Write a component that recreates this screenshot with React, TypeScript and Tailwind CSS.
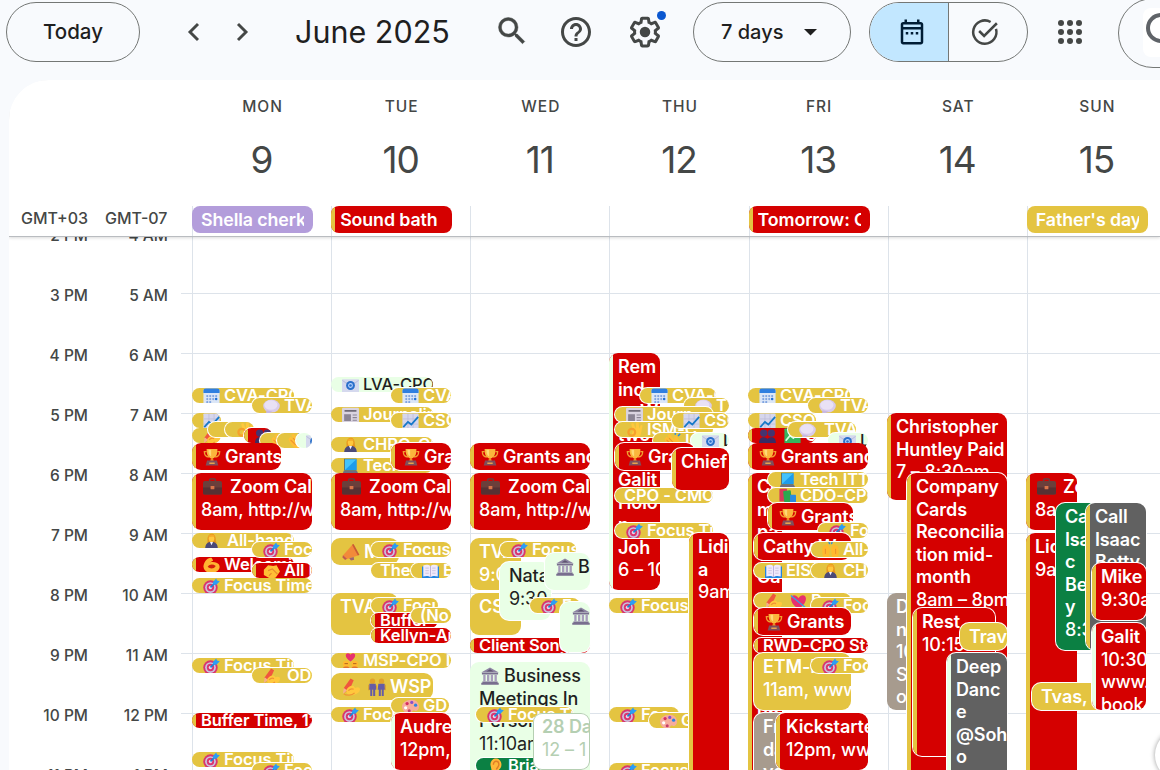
import React from "react";

type Tone = "y" | "r" | "g" | "G" | "s" | "d" | "w" | "p";
type Ev = {
  x: number; // left edge, window pixels
  y: number; // top edge, window pixels
  w: number;
  h: number;
  c: Tone;
  bar?: "y" | "g";
  o?: boolean; // outlined because it overlaps another event
  i?: string[]; // leading icons
  t?: string[]; // text lines
  n?: number; // index of the first line set in regular weight
  p?: number; // left padding
  g?: number; // gap between icon and title
};

const GRID_TOP = 237;
const COL = 139.15;
const FIRST = 192;

const tones: Record<Tone, string> = {
  y: "bg-[#e4c441] text-white",
  r: "bg-[#d50000] text-white",
  g: "bg-[#e9ffe6] text-[#1f1f1f]",
  G: "bg-[#0b8043] text-white",
  s: "bg-[#a79b8e] text-white",
  d: "bg-[#616161] text-white",
  w: "bg-white text-[#b5cfb2]",
  p: "bg-[#b39ddb] text-white",
};

function Glyph({ name }: { name: string }) {
  const art: Record<string, React.ReactNode> = {
    target: (
      <>
        <circle cx="8.8" cy="11.200" r="8.500" fill="#d9366f" />
        <circle cx="8.8" cy="11.200" r="6.300" fill="#c9c3e0" />
        <circle cx="8.8" cy="11.200" r="4.300" fill="#d9366f" />
        <circle cx="8.8" cy="11.200" r="2" fill="#e9d9ee" />
        <path d="M8.8 11 16 4" stroke="#1583d8" strokeWidth="2" />
        <path d="M11.500 5 15.500.5l1 2.500 3.300.8-4 4.200-3.800-.3z" fill="#2a9df4" />
      </>
    ),
    trophy: (
      <>
        <path d="M4 4H1.500c0 4 1.500 6 5 6M16 4h2.500c0 4-1.500 6-5 6" stroke="#f0a030" strokeWidth="1.500" fill="none" />
        <path d="M4 1h12c0 6.500-1.500 10-6 10.500C5.500 11 4 7.500 4 1z" fill="#fbb53c" />
        <path d="M6 2h3v7.500C7 8.500 6 6 6 2z" fill="#ffd976" />
        <path d="M9 11h2l1 4H8z" fill="#f08c24" />
        <path d="M4.500 14h11L17 19.500H3z" fill="#7d4f5c" />
        <path d="M7 16h6v1.800H7z" fill="#e9a14c" />
      </>
    ),
    case: (
      <>
        <path d="M7 5V3.200C7 2.500 7.500 2 8.200 2h3.600c.7 0 1.200.5 1.200 1.200V5" stroke="#5c4545" strokeWidth="1.500" fill="none" />
        <rect x="0" y="4.200" width="20" height="14.300" rx="2" fill="#6b3f3b" />
        <path d="M0 11h20v5.500a2 2 0 0 1-2 2H2a2 2 0 0 1-2-2z" fill="#563133" />
        <rect x="8" y="9.500" width="4" height="3.500" rx=".6" fill="#d9744a" />
      </>
    ),
    cal: (
      <>
        <rect x=".5" y=".5" width="19" height="19.500" rx="2.500" fill="#dbe6f7" />
        <path d="M.5 3A2.500 2.500 0 0 1 3 .5h14A2.500 2.500 0 0 1 19.500 3v3H.5z" fill="#2f7fe0" />
        <g fill="#7ea3e0">
          <circle cx="5" cy="9.500" r="1.300" /><circle cx="8.500" cy="9.500" r="1.300" /><circle cx="12" cy="9.500" r="1.300" /><circle cx="15.500" cy="9.500" r="1.300" />
          <circle cx="5" cy="13" r="1.300" /><circle cx="8.500" cy="13" r="1.300" /><circle cx="12" cy="13" r="1.300" />
          <circle cx="5" cy="16.500" r="1.300" /><circle cx="8.500" cy="16.500" r="1.300" />
        </g>
        <circle cx="15.500" cy="13" r="1.500" fill="#1f6fd6" />
      </>
    ),
    speech: (
      <>
        <ellipse cx="10" cy="9.500" rx="9.800" ry="7.600" fill="#d8cbea" />
        <path d="M4 14.500 3.500 20 11 16z" fill="#c8b8e2" />
        <ellipse cx="9.300" cy="8.300" rx="7.800" ry="5.600" fill="#e9e1f5" />
      </>
    ),
    chart: (
      <>
        <rect x=".5" y=".5" width="19" height="19" rx="1" fill="#d6d6ec" />
        <path d="M7 1v18M13 1v18M1 7h18M1 13h18" stroke="#b9b9d8" strokeWidth=".8" />
        <path d="m1.500 16.500 5.500-6 4 3 8-9" stroke="#1779c9" strokeWidth="2.100" fill="none" />
      </>
    ),
    gchart: (
      <>
        <rect x=".5" y=".5" width="19" height="19" rx="1" fill="#35b55e" />
        <path d="m2 15 5-6 4 3 7-8" stroke="#d7ffe2" strokeWidth="2" fill="none" />
      </>
    ),
    news: (
      <>
        <rect x="0" y="1" width="20" height="18" rx="1.500" fill="#d9d3e0" />
        <path d="M3 4.500h14" stroke="#6f6a78" strokeWidth="2" />
        <rect x="2.500" y="8.500" width="8" height="8" fill="#8a8494" />
        <path d="M12.500 9.500h5M12.500 12.500h5M12.500 15.500h5" stroke="#8a8494" strokeWidth="1.200" />
      </>
    ),
    mail: (
      <>
        <rect x="0" y="2.500" width="20" height="15.500" rx="1" fill="#d5d9ee" />
        <path d="m.5 4 9.500 7 9.500-7" stroke="#b4b9d8" fill="none" />
        <circle cx="10" cy="10" r="5.200" fill="#2a6fca" />
        <circle cx="10" cy="10" r="2.200" fill="none" stroke="#bcd6ff" strokeWidth="1.200" />
      </>
    ),
    laptop: (
      <>
        <path d="M2.500 1h14.500v14h-14.500z" fill="#4a6a7a" />
        <path d="M3.500 1.500h13.500v12.500h-13.500z" fill="#43c3fb" />
        <path d="M3.500 14 17 1.500v12.500z" fill="#1d9cec" />
        <path d="M2 15h15.500l2 4H.5z" fill="#6d6f80" />
      </>
    ),
    person: (
      <>
        <path d="M5.500 10c-2-11 10-13 9.500-1.500l1 3.500H5z" fill="#e8961c" />
        <ellipse cx="10" cy="6.500" rx="3.300" ry="4" fill="#ffc83d" />
        <path d="M6 5c1-4 7-4.500 8-.5-3 0-5 0-8 .5z" fill="#f5ab28" />
        <path d="M2.500 20c0-7 2-9.500 7.500-9.500s7.500 2.500 7.500 9.500z" fill="#4b4a78" />
        <path d="m8.200 10.500 1.800 4 1.800-4z" fill="#f4f4ff" />
      </>
    ),
    mega: (
      <>
        <path d="M1 14 12 1.500l6.500 12L5 18z" fill="#f28a3a" />
        <path d="m12 1.500 6.500 12" stroke="#c95c35" strokeWidth="2" />
        <path d="m1 13.500 4.500 4-2 1.500L.5 16z" fill="#c05a50" />
        <path d="m8 17 2 2.500 3.500-1-.5-3z" fill="#9c6570" />
      </>
    ),
    book: (
      <>
        <path d="M0 4h20v14.500H0z" fill="#2385e0" />
        <path d="M1.500 3C4.500 1.500 8 2 10 3.500c2-1.500 5.500-2 8.500-.5v13c-3-1-6.500-1-8.500.8-2-1.800-5.500-1.800-8.500-.8z" fill="#efe9fb" />
        <path d="M10 3.500v13" stroke="#b4a9d2" />
        <path d="M4 6h4M4 9h4M4 12h4M12 6h4M12 9h4M12 12h4" stroke="#c6bedd" />
      </>
    ),
    books: (
      <>
        <rect x=".5" y="1" width="9" height="15" rx="1" fill="#d83a5a" />
        <rect x="5.500" y="3" width="9" height="15" rx="1" fill="#2aa84f" transform="rotate(-6 10 10)" />
        <rect x="13" y="8" width="7" height="11" rx="1" fill="#2a8be0" />
      </>
    ),
    couple: (
      <>
        <path d="M10 10C3 5.500 3.500.3 7 .3c1.600 0 3 1.700 3 1.700S11.400.3 13 .3C16.500.3 17 5.500 10 10z" fill="#e8316e" />
        <circle cx="5" cy="13" r="4" fill="#ffb92e" /><circle cx="15" cy="13" r="4" fill="#ffb92e" />
        <path d="M.5 20c0-3 2-4 4.500-4s4.500 1 4.500 4zM10.500 20c0-3 2-4 4.500-4s4.500 1 4.500 4z" fill="#e0742f" />
        <path d="M3 12.500h4M13 12.500h4" stroke="#a5541c" />
      </>
    ),
    write: (
      <>
        <path d="M2 11 9.500.5l3.500 2L8 14l-5 2z" fill="#f0563d" />
        <path d="m2 11-1 6.500L6 14z" fill="#f6b08c" />
        <path d="M5 13c2-3 5-5 8-4l1.500 2c3-1.500 5.500-.5 5.500 1.500 0 3-4 6-8 6.500-5 .5-8-2-7-6z" fill="#ffc83d" />
        <path d="M2 17.500c3 2.500 9 2 12-1M7 14c2-2 4-2.500 6-1.500" stroke="#ef9434" strokeWidth="1.400" fill="none" />
      </>
    ),
    men: (
      <>
        <circle cx="5" cy="3.500" r="3" fill="#e2a32b" /><circle cx="15" cy="3.500" r="3" fill="#e2a32b" />
        <path d="M1.500 6.500h7l.8 6.500H8v7H2.500v-7H1zM11.500 6.500h7l.5 6.500h-1.500v7H12v-7h-1.300z" fill="#655ca5" />
        <path d="M5.200 13v7M14.800 13v7" stroke="#e4c441" />
        <path d="M.8 7.500v6M9.500 8v4M19.200 7.500v6" stroke="#d79a35" strokeWidth="1.200" />
      </>
    ),
    people: (
      <>
        <circle cx="5.500" cy="6" r="4.300" fill="#44346f" /><circle cx="14.500" cy="6" r="4.300" fill="#44346f" />
        <path d="M0 19c0-6 2-8 5.500-8 2 0 3.500 1 4.500 2 1-1 2.500-2 4.500-2 3.500 0 5.500 2 5.500 8z" fill="#3a2c63" />
      </>
    ),
    palette: (
      <>
        <path d="M11 2c6 0 9 4 9 8s-3 6-5 5-3 0-3 1.500-1 3-3 2.500C4 18.500 0 14.500 0 10S5 2 11 2z" fill="#f7ac9c" />
        <circle cx="6" cy="6.500" r="1.900" fill="#d62f62" /><circle cx="11.500" cy="5.200" r="1.900" fill="#8b50c8" />
        <circle cx="16" cy="8.500" r="1.900" fill="#2d84df" /><circle cx="4.300" cy="11.500" r="1.900" fill="#fff" />
        <circle cx="8.500" cy="15" r="1.800" fill="#c53b6b" />
      </>
    ),
    bank: (
      <>
        <path d="M10 .5 19.800 6H.2z" fill="#8d83a3" />
        <path d="M1 6.500h18v1.800H1zM1.500 16h17v1.500h-17zM.3 17.500h19.400v2.300H.3z" fill="#786e8e" />
        <path d="M2.500 8.500h2.600V16H2.500zM6.700 8.500h2.600V16H6.700zM10.800 8.500h2.600V16h-2.600zM15 8.500h2.600V16H15z" fill="#a79dbb" />
        <path d="M10 2.500 14 5H6z" fill="#5e556f" />
      </>
    ),
    ear: (
      <>
        <path d="M4 8C4-2 17-2 17 8c0 5-4 5.500-5 9-1 3.500-6 3.500-6 0z" fill="#ffb83a" />
        <path d="M7.500 8c0-5.500 6.500-5.500 6.500 0 0 2-2 3-3 5.500" stroke="#e07e25" strokeWidth="1.600" fill="none" />
      </>
    ),
    ok: (
      <>
        <path d="M8 10 6 2l2.500-.8L11.500 8l.5-7.500h2.800L15.500 8l2-4.500 2 .6L17.500 14c-1 6-9 6.500-11 2z" fill="#ffc83d" />
        <circle cx="6.800" cy="12" r="4" fill="none" stroke="#f5a12c" strokeWidth="2.600" />
      </>
    ),
    clap: (
      <>
        <path d="M.5 7 3 4l5 5-4-6.500 2.500-1.500L12 8V4l2.800-.5L19.500 12c1 5.500-4 8.500-8.500 7C5.500 17.500 2 12 .5 7z" fill="#ffbe35" />
        <path d="m3 8 6 6M6 6l5.500 6" stroke="#ef922f" strokeWidth="1.200" />
        <path d="m13 2 .5-2M16.500 3.500 19 1" stroke="#2a8be0" strokeWidth="1.800" />
      </>
    ),
    hands: (
      <>
        <path d="M2 19C-1 13 .5 6 2 4l2 .5L5 2l2 .5L8 6l1.500 1L8 19zM18 19c3-6 1.500-13 0-15l-2 .5L15 2l-2 .5L12 6l-1.500 1L12 19z" fill="#ffb92e" />
        <path d="M4 8v6M16 8v6" stroke="#e8892c" />
        <path d="M9 2.500 8 0M11 2.500 12 0" stroke="#2a8be0" strokeWidth="1.500" />
      </>
    ),
    muscle: (
      <>
        <path d="M.5 11C1.500 4 6 1 10 1l2 3-4 2.500c3-1 6-.5 8.500.5 4 1.500 4 7 .5 9.500C12 20 1 20 .5 11z" fill="#ffb531" />
        <path d="M5.500 11.500c2-3 6-3.500 9.500-1-2 3.500-6.500 4-9.500 1z" fill="#d5200c" />
      </>
    ),
    shake: (
      <>
        <path d="M1 8 6 2.500l6 1 4-1L20 10l-5 7-5.500 2L1 14z" fill="#ffbe35" />
        <path d="m6 9 5-2 6 6M7 15l3-3" stroke="#e8892c" strokeWidth="1.400" fill="none" />
      </>
    ),
    heart: (
      <>
        <path d="M10 19C-1 12-.5 2.500 5 2.500 8 2.500 10 6 10 6s2-3.500 5-3.500c5.500 0 6 9.500-5 16.500z" fill="#e8316e" />
        <path d="m1 3 17 14" stroke="#3a9bea" strokeWidth="1.600" />
      </>
    ),
  };
  return (
    <svg viewBox="0 0 20 20" className="h-full w-full" aria-hidden="true">
      {art[name]}
    </svg>
  );
}

const zoom = (x: number): Ev => ({ x, y: 473, w: 120, h: 57, c: "r", bar: "y", i: ["case"], g: 8, t: ["Zoom Call", "8am, http://www"], n: 1 });
const pill = (x: number, y: number, w: number, icon: string, text: string, o = false, c: Tone = "y"): Ev => ({ x, y, w, h: 15, c, o, i: [icon], t: [text] });
const plain = (x: number, y: number, w: number, text: string, c: Tone, o = false, bar?: "y" | "g"): Ev => ({ x, y, w, h: 15, c, o, bar, t: [text], p: 9 });
const cup = (x: number, y: number, w: number, text: string, o = false): Ev => ({ x, y, w, h: 27, c: "r", bar: "y", o, i: ["trophy"], t: [text], g: 4 });

const days: { name: string; num: number; all?: { c: Tone; bar?: boolean; t: string }; ev: Ev[] }[] = [
  {
    name: "MON", num: 9, all: { c: "p", t: "Shella cherkasky" },
    ev: [
      pill(192, 388, 102, "cal", "CVA-CPO"),
      pill(252, 398, 60, "speech", "TVA", true),
      pill(192, 413, 29, "chart", ""),
      pill(192, 428, 29, "write", ""),
      pill(208, 422, 32, "", "", true),
      pill(225, 422, 29, "ok", "", true),
      { ...pill(244, 428, 28, "people", "", true, "r"), bar: "y" },
      pill(260, 433, 32, "clap", "", true),
      pill(277, 433, 30, "clap", "", true),
      { x: 296, y: 433, w: 16, h: 15, c: "g", o: true, i: ["mail"], t: [""], p: 8 },
      cup(192, 443, 89, "Grants"),
      zoom(192),
      { ...pill(192, 533, 102, "person", "All-hands"), g: 7 },
      { ...pill(192, 557, 102, "muscle", "Welcoming", false, "r"), bar: "y" },
      pill(252, 542, 60, "target", "Focus", true),
      { ...pill(252, 563, 60, "shake", "All I", true, "r"), bar: "y" },
      pill(192, 578, 120, "target", "Focus Time"),
      pill(192, 658, 102, "target", "Focus Time"),
      { ...pill(252, 668, 60, "write", "ODC", true), g: 7 },
      plain(192, 713, 120, "Buffer Time, 12", "r", false, "y"),
      pill(192, 752, 102, "target", "Focus Time"),
      pill(252, 763, 60, "target", "Focus", true),
    ],
  },
  {
    name: "TUE", num: 10, all: { c: "r", bar: true, t: "Sound bath" },
    ev: [
      pill(331, 377, 102, "mail", "LVA-CPO", false, "g"),
      pill(391, 388, 60, "cal", "CVA-", true),
      pill(331, 407, 102, "news", "Journaling"),
      pill(391, 413, 60, "chart", "CSO", true),
      pill(331, 437, 102, "person", "CHRO-CP"),
      pill(331, 458, 102, "laptop", "Tech ITT"),
      cup(391, 443, 60, "Grants", true),
      zoom(331),
      { x: 331, y: 538, w: 68, h: 27, c: "y", i: ["mega"], t: ["MS"] },
      pill(371, 542, 80, "target", "Focus", true),
      plain(371, 563, 60, "The", "y", true),
      pill(411, 563, 40, "book", "E", true),
      { x: 331, y: 593, w: 67, h: 42, c: "y", t: ["TVA"], p: 9 },
      pill(371, 598, 67, "target", "Focus", true),
      plain(371, 613, 67, "Buffer", "r", true, "y"),
      plain(411, 608, 40, "(No t", "y", true),
      plain(371, 628, 80, "Kellyn-An", "r", true, "y"),
      pill(331, 653, 120, "couple", "MSP-CPO I"),
      { x: 331, y: 673, w: 102, h: 27, c: "y", i: ["write", "men"], t: ["WSP"] },
      pill(331, 707, 80, "target", "Focus"),
      { ...pill(391, 698, 60, "palette", "GD", true), w: 58 },
      { x: 391, y: 713, w: 60, h: 57, c: "r", bar: "g", o: true, t: ["Audrey", "12pm,"], n: 1, p: 9 },
    ],
  },
  {
    name: "WED", num: 11,
    ev: [
      cup(470, 443, 120, "Grants and"),
      zoom(470),
      { x: 470, y: 538, w: 51, h: 52, c: "y", t: ["TVA", "9:05"], n: 1, p: 9 },
      { x: 470, y: 593, w: 51, h: 42, c: "y", t: ["CS"], p: 9 },
      pill(500, 542, 76, "target", "Focus T", true),
      { x: 500, y: 562, w: 51, h: 58, c: "g", o: true, t: ["Nata", "9:30"], n: 1, p: 9 },
      { x: 545, y: 553, w: 45, h: 37, c: "g", o: true, i: ["bank"], t: ["Bu"] },
      pill(530, 598, 50, "target", "F", true),
      plain(470, 638, 120, "Client Songs of", "r", false, "y"),
      { x: 560, y: 602, w: 30, h: 50, c: "g", o: true, i: ["bank"], t: [""], p: 10 },
      { x: 470, y: 662, w: 120, h: 120, c: "g", i: ["bank"], g: 5, t: ["Business", "Meetings In", "Person", "11:10am"], n: 3, p: 9 },
      pill(476, 707, 97, "target", "Focus Tim", true),
      pill(476, 758, 90, "ear", "Brian", true, "G"),
      { x: 533, y: 713, w: 57, h: 57, c: "w", t: ["28 Day", "12 – 1"], n: 1, p: 9 },
    ],
  },
  {
    name: "THU", num: 12,
    ev: [
      { x: 609, y: 353, w: 51, h: 237, c: "r", bar: "g", t: ["Rem", "ind", "er W", "two", "of", "Galit", "Holo", "n", "Joh", "6 – 10"], n: 9, p: 9 },
      pill(640, 388, 76, "cal", "CVA-C", true),
      pill(684, 398, 45, "speech", "TV", true),
      pill(615, 407, 98, "news", "Journ", true),
      pill(615, 422, 98, "ok", "ISM-C", true),
      pill(672, 413, 57, "chart", "CSO", true),
      pill(653, 433, 60, "clap", "IC", true),
      pill(691, 433, 38, "mail", "LV", true, "g"),
      cup(615, 443, 80, "Grants", true),
      plain(615, 488, 98, "CPO - CMO", "y", true),
      { x: 672, y: 448, w: 57, h: 42, c: "r", bar: "y", o: true, t: ["Chief"], p: 9 },
      pill(615, 523, 98, "target", "Focus Tim", true),
      pill(609, 598, 102, "target", "Focus Ti"),
      pill(609, 707, 70, "target", "Foc"),
      pill(649, 713, 60, "palette", "GD", true),
      pill(609, 763, 102, "target", "Focus Ti"),
      { x: 689, y: 533, w: 40, h: 260, c: "r", bar: "y", o: true, t: ["Lidi", "a", "9am"], n: 2, p: 9 },
    ],
  },
  {
    name: "FRI", num: 13, all: { c: "r", bar: true, t: "Tomorrow: CP" },
    ev: [
      pill(748, 388, 102, "cal", "CVA-CPO"),
      pill(808, 398, 60, "speech", "TVA", true),
      pill(748, 413, 68, "chart", "CSO"),
      { ...pill(748, 428, 68, "people", "G", false, "r"), i: ["people", "gchart"], bar: "y" },
      { ...pill(788, 422, 68, "speech", "TVA", true), g: 8 },
      pill(828, 433, 40, "mail", "LV", true, "g"),
      cup(748, 443, 120, "Grants and"),
      { x: 748, y: 473, w: 34, h: 310, c: "r", bar: "y", t: ["Co", "m", "pa", "Wa", "Ca", "rd", "m", "on", "th", "ly", "un", "til"], p: 9 },
      pill(768, 472, 100, "laptop", "Tech ITT", true),
      pill(768, 488, 100, "books", "CDO-CPO", true),
      cup(768, 503, 85, "Grants", true),
      pill(818, 523, 50, "target", "Foc", true),
      { x: 754, y: 533, w: 97, h: 27, c: "r", bar: "y", o: true, t: ["Cathy W"], p: 9 },
      pill(811, 542, 57, "hands", "All-h", true),
      pill(754, 563, 80, "book", "EIS", true),
      pill(811, 563, 57, "person", "CHR", true),
      { ...pill(754, 593, 97, "write", "Pow", true), i: ["write", "heart"] },
      pill(811, 598, 57, "target", "Focus", true),
      cup(754, 608, 97, "Grants", true),
      plain(754, 638, 114, "RWD-CPO Sta", "r", true, "y"),
      { x: 754, y: 653, w: 97, h: 57, c: "y", o: true, t: ["ETM-I", "11am, www"], n: 1, p: 9 },
      pill(811, 658, 57, "target", "Focus", true),
      { x: 754, y: 713, w: 40, h: 70, c: "s", o: true, t: ["Fri", "da", "yo"], p: 9 },
      { x: 776, y: 713, w: 92, h: 57, c: "r", bar: "y", o: true, t: ["Kickstarter", "12pm, www"], n: 1, p: 10 },
    ],
  },
  {
    name: "SAT", num: 14,
    ev: [
      { x: 887, y: 413, w: 120, h: 87, c: "r", bar: "y", t: ["Christopher", "Huntley Paid", "7 – 8:30am"], n: 2, p: 9 },
      { x: 887, y: 593, w: 40, h: 117, c: "s", t: ["D", "n", "10", "S", "o"], n: 2, p: 9 },
      { x: 907, y: 473, w: 100, h: 310, c: "r", bar: "y", o: true, t: ["Company", "Cards", "Reconcilia", "tion mid-", "month", "8am – 8pm"], n: 5, p: 9 },
      { x: 913, y: 608, w: 82, h: 148, c: "r", bar: "y", o: true, t: ["Rest", "10:15am"], n: 1, p: 9 },
      { x: 960, y: 623, w: 47, h: 27, c: "y", o: true, t: ["Travel"], p: 9 },
      { x: 947, y: 653, w: 60, h: 130, c: "d", bar: "g", o: true, t: ["Deep", "Danc", "e", "@Soh", "o"], p: 9 },
    ],
  },
  {
    name: "SUN", num: 15, all: { c: "y", t: "Father's day" },
    ev: [
      { x: 1026, y: 473, w: 51, h: 57, c: "r", bar: "y", i: ["case"], g: 7, t: ["Zo", "8am"], n: 1 },
      { x: 1026, y: 533, w: 51, h: 260, c: "r", bar: "y", t: ["Lidi", "9am"], n: 1, p: 9 },
      { x: 1056, y: 503, w: 60, h: 147, c: "G", o: true, t: ["Call", "Isaa", "c", "Bett", "y", "8:30"], n: 5, p: 9 },
      { x: 1086, y: 503, w: 60, h: 147, c: "d", bar: "y", o: true, t: ["Call", "Isaac", "Betty"], p: 9 },
      { x: 1032, y: 683, w: 80, h: 27, c: "y", o: true, t: ["Tvas,"], p: 9 },
      { x: 1092, y: 563, w: 54, h: 57, c: "r", bar: "y", o: true, t: ["Mike", "9:30a"], n: 1, p: 9 },
      { x: 1092, y: 623, w: 54, h: 87, c: "r", bar: "g", o: true, t: ["Galit", "10:30", "www.", "book."], n: 1, p: 9 },
    ],
  },
];

function EventBox({ e, col }: { e: Ev; col: number }) {
  const small = e.h <= 15;
  const radius = small ? "rounded-[8px]" : "rounded-[9px]";
  const ring = e.c === "w" ? "ring-1 ring-inset ring-[#b5cfb2]" : e.o ? "ring-1 ring-white" : "";
  const lines = e.t ?? [];
  const regular = e.n ?? lines.length;
  return (
    <div
      className={`absolute overflow-hidden whitespace-nowrap ${radius} ${ring} ${tones[e.c]}`}
      style={{ left: e.x - FIRST - col * COL, top: e.y - GRID_TOP, width: e.w, height: e.h }}
    >
      {e.bar && <div className={`absolute inset-y-0 left-0 w-1 ${e.bar === "y" ? "bg-[#e4c441]" : "bg-[#e9ffe6]"}`} />}
      <div
        className={small ? "text-[16.5px] leading-[15px] tracking-[-0.1px]" : "pt-[3px] text-[18px] leading-[22.6px] tracking-[-0.1px]"}
        style={{ paddingLeft: e.p ?? 9 }}
      >
        {lines.map((line, k) => (
          <div key={k} className={`flex ${k >= regular ? (e.c === "g" || e.c === "w" ? "font-normal" : "font-[450]") : e.c === "g" ? "font-medium" : "font-semibold"}`}>
            {k === 0 &&
              e.i?.map((name, j) => (
                <span
                  key={j}
                  className={`flex shrink-0 ${small ? "h-[17px] w-[17px]" : name === "case" ? "mt-[1px] h-[19px] w-[19px]" : "mt-[2px] h-[18px] w-[18px]"}`}
                  style={{ marginLeft: j === 0 ? 2 : 8, marginRight: j === e.i!.length - 1 ? (e.g ?? 4) : 0 }}
                >
                  <Glyph name={name} />
                </span>
              ))}
            <span>{line}</span>
          </div>
        ))}
      </div>
    </div>
  );
}

const zoneA = ["2 PM", "3 PM", "4 PM", "5 PM", "6 PM", "7 PM", "8 PM", "9 PM", "10 PM", "11 PM"];
const zoneB = ["4 AM", "5 AM", "6 AM", "7 AM", "8 AM", "9 AM", "10 AM", "11 AM", "12 PM", "1 PM"];

function Hours({ labels, cls }: { labels: string[]; cls: string }) {
  return (
    <div className={`-mt-[31px] shrink-0 text-right text-[15.5px] font-medium text-[#444746] ${cls}`}>
      {labels.map((l) => (
        <div key={l} className="flex h-[60px] items-center justify-end whitespace-nowrap">{l}</div>
      ))}
    </div>
  );
}

function Toolbar() {
  return (
    <header className="relative flex h-20 shrink-0 items-start text-[#444746]">
      <button className="mt-[2px] ml-[6px] h-[60px] w-[134px] shrink-0 rounded-full border border-[#747775] text-[20.5px] font-medium text-[#1f1f1f]">Today</button>
      <svg className="mt-[20px] ml-[42px] h-6 w-6 shrink-0" viewBox="0 0 24 24" fill="none" stroke="currentColor" strokeWidth="2.900"><path d="m16 4-8 8 8 8" /></svg>
      <svg className="mt-[20px] ml-[24px] h-6 w-6 shrink-0" viewBox="0 0 24 24" fill="none" stroke="currentColor" strokeWidth="2.900"><path d="m8 4 8 8-8 8" /></svg>
      <h1 className="mt-[11px] ml-[41px] w-[190px] shrink-0 text-[30.5px] leading-[42px] font-normal whitespace-nowrap text-[#1f1f1f]">June 2025</h1>
      <svg className="mt-[13px] ml-[9px] h-9 w-9 shrink-0" viewBox="0 0 24 24" fill="currentColor"><path d="M15.500 14h-.79l-.28-.27A6.470 6.470 0 0 0 16 9.500 6.500 6.500 0 1 0 9.500 16c1.610 0 3.090-.59 4.230-1.570l.27.28v.79l5 4.990L20.490 19zm-6 0C7.010 14 5 11.990 5 9.500S7.010 5 9.500 5 14 7.010 14 9.500 11.990 14 9.500 14z" stroke="currentColor" strokeWidth=".3" /></svg>
      <svg className="mt-[14px] ml-[28px] h-9 w-9 shrink-0" viewBox="0 0 24 24" fill="currentColor"><path d="M11 18h2v-2h-2zm1-16C6.480 2 2 6.480 2 12s4.480 10 10 10 10-4.480 10-10S17.520 2 12 2m0 18c-4.410 0-8-3.590-8-8s3.590-8 8-8 8 3.590 8 8-3.590 8-8 8m0-14c-2.210 0-4 1.790-4 4h2c0-1.100.9-2 2-2s2 .9 2 2c0 2-3 1.750-3 5h2c0-2.250 3-2.500 3-5 0-2.210-1.790-4-4-4" /></svg>
      <div className="relative mt-[14px] ml-[33px] h-9 w-9 shrink-0">
        <svg className="h-9 w-9" viewBox="0 0 24 24" fill="currentColor">
          <path d="M13.850 22.250h-3.700c-.74 0-1.360-.54-1.450-1.270l-.27-1.890c-.27-.14-.53-.29-.79-.46l-1.800.72c-.7.26-1.470-.03-1.810-.65L2.200 15.530c-.35-.66-.2-1.440.36-1.880l1.530-1.190c-.01-.15-.02-.3-.02-.46 0-.15.010-.31.020-.46l-1.520-1.190c-.59-.45-.74-1.260-.37-1.880l1.850-3.190c.34-.62 1.110-.9 1.790-.63l1.810.73c.26-.17.52-.32.78-.46l.27-1.910c.09-.7.710-1.250 1.440-1.250h3.700c.74 0 1.360.54 1.450 1.270l.27 1.890c.27.14.53.29.79.46l1.800-.72c.71-.26 1.480.03 1.820.65l1.840 3.180c.36.66.2 1.440-.36 1.880l-1.520 1.190c.01.15.02.3.02.46s-.01.31-.02.46l1.520 1.190c.56.45.72 1.230.37 1.860l-1.860 3.220c-.34.62-1.110.9-1.800.63l-1.800-.72c-.26.17-.52.32-.78.46l-.27 1.910c-.1.680-.72 1.220-1.460 1.220zm-3.230-2h2.760l.37-2.550.53-.22c.44-.18.880-.44 1.340-.78l.45-.34 2.380.96 1.380-2.400-2.030-1.580.07-.56c.03-.26.06-.51.06-.78s-.03-.53-.06-.78l-.07-.56 2.030-1.580-1.390-2.400-2.390.96-.45-.35c-.42-.32-.87-.58-1.330-.77l-.52-.22-.37-2.550h-2.760l-.37 2.550-.53.21c-.44.19-.88.44-1.340.79l-.45.33-2.380-.95-1.390 2.390 2.030 1.580-.07.56a7 7 0 0 0-.06.79c0 .26.02.53.06.78l.07.56-2.030 1.580 1.380 2.400 2.390-.96.45.35c.43.33.86.58 1.330.77l.53.22z" />
          <circle cx="12" cy="12" r="3.500" />
        </svg>
        <span className="absolute -top-[3px] left-[30px] h-[9px] w-[9px] rounded-full bg-[#0b57d0]" />
      </div>
      <button className="mt-[2px] ml-[30px] flex h-[60px] w-[158px] shrink-0 items-center rounded-full border border-[#747775] pl-[27px] text-[20px] font-medium text-[#1f1f1f]">
        <span className="w-[64px] text-left whitespace-nowrap">7 days</span>
        <svg className="ml-[19px] h-[7px] w-[13px]" viewBox="0 0 13 7"><path d="M0 0h13L6.500 6.500z" fill="#1f1f1f" /></svg>
      </button>
      <div className="mt-[2px] ml-[18px] flex h-[60px] w-[159px] shrink-0 overflow-hidden rounded-full border border-[#747775]">
        <div className="flex w-[79px] items-center justify-center border-r border-[#747775] bg-[#c2e7ff] pl-[5px] text-[#001d35]">
          <svg className="h-[30px] w-[30px]" viewBox="0 0 24 24" fill="currentColor"><path d="M19 4h-1V2h-2v2H8V2H6v2H5a2 2 0 0 0-2 2v14c0 1.100.9 2 2 2h14c1.100 0 2-.9 2-2V6c0-1.100-.9-2-2-2m0 16H5V10h14zm0-12H5V6h14zM7 12h2v2H7zm4 0h2v2h-2zm4 0h2v2h-2z" /></svg>
        </div>
        <div className="flex flex-1 items-center justify-center pr-[6px]">
          <svg className="h-[30px] w-[30px]" viewBox="0 0 24 24" fill="none" stroke="currentColor" strokeWidth="2"><path d="M20.800 9.500A9.300 9.300 0 1 1 16.500 4" /><path d="m7.300 11.200 4 4L21.500 5" /></svg>
        </div>
      </div>
      <svg className="mt-[20px] ml-[30px] h-[24px] w-[24px] shrink-0" viewBox="0 0 24 24" fill="currentColor">
        {[3, 12, 21].flatMap((a) => [3, 12, 21].map((b) => <circle key={`${a}-${b}`} cx={a} cy={b} r="3" />))}
      </svg>
      <div className="-mt-[2px] ml-[36px] h-[70px] w-[160px] shrink-0 rounded-full border border-[#747775] pt-[9px] pl-[24px]">
        <div className="h-[49px] w-[100px] rounded-lg bg-white pt-[4px] pl-[2px]">
          <svg className="h-[32px] w-[32px]" viewBox="0 0 32 32" fill="none" stroke="#5f6368" strokeWidth="4"><circle cx="16" cy="16" r="13" /></svg>
        </div>
      </div>
    </header>
  );
}

export default function App() {
  return (
    <div className="relative flex h-[770px] w-[1160px] flex-col overflow-hidden bg-[#f8fafd] font-[Inter,Roboto,sans-serif]">
      <Toolbar />
      <main className="ml-[9px] flex min-h-0 flex-1 flex-col overflow-hidden rounded-tl-[40px] bg-white">
        <div className="relative z-10 flex h-[157px] shrink-0 border-b border-[#b9bcc0] bg-white shadow-[0_1px_3px_rgba(0,0,0,0.15)]">
          <div className="flex w-[183px] shrink-0 items-end pb-[7px] text-[16px] leading-[22px] font-medium text-[#444746]">
            <span className="ml-[12px] w-[84px]">GMT+03</span>
            <span>GMT-07</span>
          </div>
          {days.map((d) => (
            <div key={d.name} className="flex w-[139.15px] shrink-0 flex-col">
              <div className="mt-[16px] pl-[2px] text-center text-[15.500px] leading-[22px] font-medium tracking-[1px] text-[#444746]">{d.name}</div>
              <div className="mt-[19px] text-center text-[37px] leading-[46px] tracking-[-1px] text-[#444746]">{d.num}</div>
              <div className="mt-[23px] h-[30px] border-l border-[#dde3ea]">
                {d.all && (
                  <div className={`-ml-px flex h-[27px] w-[121px] overflow-hidden rounded-[8px] text-[17.800px] leading-[27px] font-semibold tracking-[-0.1px] whitespace-nowrap ${tones[d.all.c]}`}>
                    <span className={`w-1 shrink-0 ${d.all.bar ? "bg-[#e4c441]" : ""}`} />
                    <span className="mr-[9px] ml-[5px] overflow-hidden">{d.all.t}</span>
                  </div>
                )}
              </div>
            </div>
          ))}
        </div>
        <div className="flex min-h-0 flex-1">
          <Hours labels={zoneA} cls="w-[79px]" />
          <Hours labels={zoneB} cls="w-[80px]" />
          <div className="relative ml-[13px] flex flex-1">
            <div className="absolute inset-0 flex flex-col">
              <div className="h-[57px] shrink-0 border-b border-[#dde3ea]" />
              {zoneA.slice(1).map((l) => (
                <div key={l} className="h-[60px] shrink-0 border-b border-[#dde3ea]" />
              ))}
            </div>
            <div className="flex pl-[11px]">
              {days.map((d, c) => (
                <div key={d.name} className="relative w-[139.15px] shrink-0 border-l border-[#dde3ea]">
                  <div className="absolute top-0 -left-px">
                    {d.ev.map((e, k) => (
                      <EventBox key={k} e={e} col={c} />
                    ))}
                  </div>
                </div>
              ))}
            </div>
          </div>
        </div>
      </main>
      <div className="absolute top-[729px] left-[1155px] h-[52px] w-[52px] rounded-full bg-white shadow-[0_0_5px_rgba(0,0,0,0.4)]" />
    </div>
  );
}
